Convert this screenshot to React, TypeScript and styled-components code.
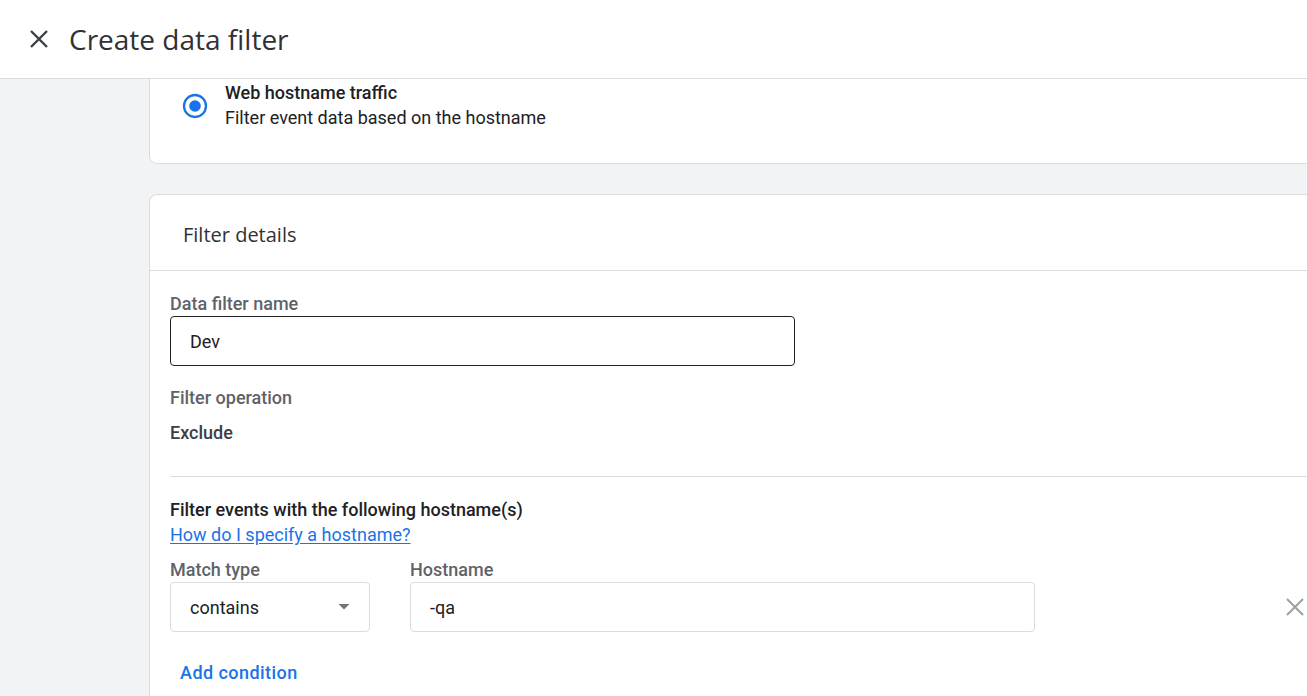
import React from "react";
import styled, { createGlobalStyle } from "styled-components";

const Global = createGlobalStyle`
  html, body { margin: 0; padding: 0; }
  body {
    font-family: Roboto, "Noto Sans", Arial, sans-serif;
    background: #f1f3f4;
    overflow: hidden;
    width: 1307px;
    height: 696px;
  }
  * { box-sizing: border-box; }
`;

const Page = styled.div`
  display: flex;
  flex-direction: column;
  height: 696px;
  overflow: hidden;
`;

const Header = styled.header`
  height: 79px;
  flex: none;
  background: #fff;
  border-bottom: 1px solid #dadce0;
  display: flex;
  align-items: center;
  padding-left: 30px;
  gap: 21px;
  position: relative;
  z-index: 2;
`;

const CloseButton = styled.button`
  width: 18px;
  height: 18px;
  border: none;
  background: none;
  padding: 0;
  display: flex;
  align-items: center;
  justify-content: center;
  color: #3c4043;
  cursor: pointer;
`;

const Title = styled.h1`
  margin: 0;
  font-family: "Open Sans", Roboto, sans-serif;
  font-weight: 400;
  font-size: 28px;
  line-height: 36px;
  color: #303134;
`;

const Main = styled.main`
  flex: 1;
  display: flex;
  flex-direction: column;
  gap: 30px;
  padding-left: 149px;
  margin-right: -40px;
  margin-top: -20px;
  margin-bottom: -40px;
`;

const Card = styled.section<{ $grow?: boolean }>`
  background: #fff;
  border: 1px solid #dadce0;
  border-radius: 8px;
  flex: ${(p) => (p.$grow ? "1" : "none")};
`;

const RadioRow = styled.div`
  display: flex;
  align-items: center;
  padding: 21px 0 33px 31px;
  gap: 16px;
`;

const RadioMark = styled.span`
  width: 28px;
  height: 28px;
  display: flex;
  align-items: center;
  justify-content: center;
  flex: none;
`;

const RadioText = styled.div`
  display: flex;
  flex-direction: column;
  gap: 1px;
  color: #202124;
  font-size: 18px;
  line-height: 24px;
`;

const RadioTitle = styled.span`
  font-weight: 500;
`;

const CardHeader = styled.div`
  height: 76px;
  border-bottom: 1px solid #dadce0;
  display: flex;
  align-items: center;
  padding: 3px 0 0 33px;
`;

const CardTitle = styled.h2`
  margin: 0;
  font-family: "Open Sans", Roboto, sans-serif;
  font-size: 20px;
  font-weight: 400;
  color: #303134;
`;

const Body = styled.div`
  padding: 21px 0 0 20px;
  display: flex;
  flex-direction: column;
`;

const Label = styled.label`
  display: block;
  font-size: 18px;
  font-weight: 500;
  color: #5f6368;
  line-height: 24px;
`;

const TextBox = styled.div<{ $width: number; $focused?: boolean }>`
  width: ${(p) => p.$width}px;
  height: 50px;
  border: 1px solid ${(p) => (p.$focused ? "#202124" : "#dadce0")};
  border-radius: 4px;
  display: flex;
  align-items: center;
  justify-content: space-between;
  padding: 0 19px 0 19px;
  font-size: 18px;
  color: #202124;
  background: #fff;
`;

const Field = styled.div`
  display: flex;
  flex-direction: column;
  gap: 0;
`;

const OpBlock = styled.div`
  margin-top: 20px;
  display: flex;
  flex-direction: column;
  gap: 11px;
  padding-bottom: 31px;
  border-bottom: 1px solid #dadce0;
`;

const OpValue = styled.div`
  font-size: 18px;
  font-weight: 500;
  color: #3c4043;
  line-height: 24px;
`;

const Section = styled.div`
  margin-top: 21px;
  display: flex;
  flex-direction: column;
`;

const SectionTitle = styled.div`
  font-size: 18px;
  font-weight: 500;
  color: #202124;
  line-height: 24px;
`;

const HelpLink = styled.a`
  font-size: 18px;
  line-height: 24px;
  color: #1a73e8;
  text-decoration: underline;
  text-underline-offset: 2px;
  align-self: flex-start;
  cursor: pointer;
  margin-top: 1px;
`;

const ConditionRow = styled.div`
  display: flex;
  align-items: flex-end;
  gap: 40px;
  margin-top: 11px;
  width: 1134px;
`;

const RemoveButton = styled.button`
  margin-left: auto;
  height: 50px;
  border: none;
  background: none;
  padding: 0;
  display: flex;
  align-items: center;
  color: #9aa0a6;
`;

const AddButton = styled.button`
  align-self: flex-start;
  border: none;
  background: none;
  font-family: inherit;
  font-size: 18px;
  font-weight: 500;
  letter-spacing: 0.45px;
  color: #1a73e8;
  padding: 0 10px;
  margin-top: 29px;
  line-height: 24px;
  cursor: pointer;
`;

const CloseIcon = ({ size, stroke }: { size: number; stroke: number }) => (
  <svg width={size} height={size} viewBox="0 0 18 18" fill="none">
    <path d="M1 1 L17 17 M17 1 L1 17" stroke="currentColor" strokeWidth={stroke} />
  </svg>
);

const RadioIcon = () => (
  <svg width="26" height="26" viewBox="0 0 26 26">
    <circle cx="13" cy="13" r="11" fill="#fff" stroke="#1a73e8" strokeWidth="2.3" />
    <circle cx="13" cy="13" r="5.8" fill="#1a73e8" />
  </svg>
);

export default function App() {
  return (
    <>
      <Global />
      <Page>
        <Header>
          <CloseButton aria-label="Close">
            <CloseIcon size={18} stroke={2.4} />
          </CloseButton>
          <Title>Create data filter</Title>
        </Header>
        <Main>
          <Card>
            <RadioRow>
              <RadioMark>
                <RadioIcon />
              </RadioMark>
              <RadioText>
                <RadioTitle>Web hostname traffic</RadioTitle>
                <span>Filter event data based on the hostname</span>
              </RadioText>
            </RadioRow>
          </Card>
          <Card $grow>
            <CardHeader>
              <CardTitle>Filter details</CardTitle>
            </CardHeader>
            <Body>
              <Field>
                <Label>Data filter name</Label>
                <TextBox $width={625} $focused>Dev</TextBox>
              </Field>
              <OpBlock>
                <Label>Filter operation</Label>
                <OpValue>Exclude</OpValue>
              </OpBlock>
              <Section>
                <SectionTitle>Filter events with the following hostname(s)</SectionTitle>
                <HelpLink>How do I specify a hostname?</HelpLink>
                <ConditionRow>
                  <Field>
                    <Label>Match type</Label>
                    <TextBox $width={200}>
                      contains
                      <svg width="12" height="6" viewBox="0 0 12 6">
                        <path d="M0.5 0 L11.5 0 L6 5.5 Z" fill="#757575" />
                      </svg>
                    </TextBox>
                  </Field>
                  <Field>
                    <Label>Hostname</Label>
                    <TextBox $width={625}>-qa</TextBox>
                  </Field>
                  <RemoveButton aria-label="Remove">
                    <CloseIcon size={18} stroke={2} />
                  </RemoveButton>
                </ConditionRow>
                <AddButton>Add condition</AddButton>
              </Section>
            </Body>
          </Card>
        </Main>
      </Page>
    </>
  );
}
